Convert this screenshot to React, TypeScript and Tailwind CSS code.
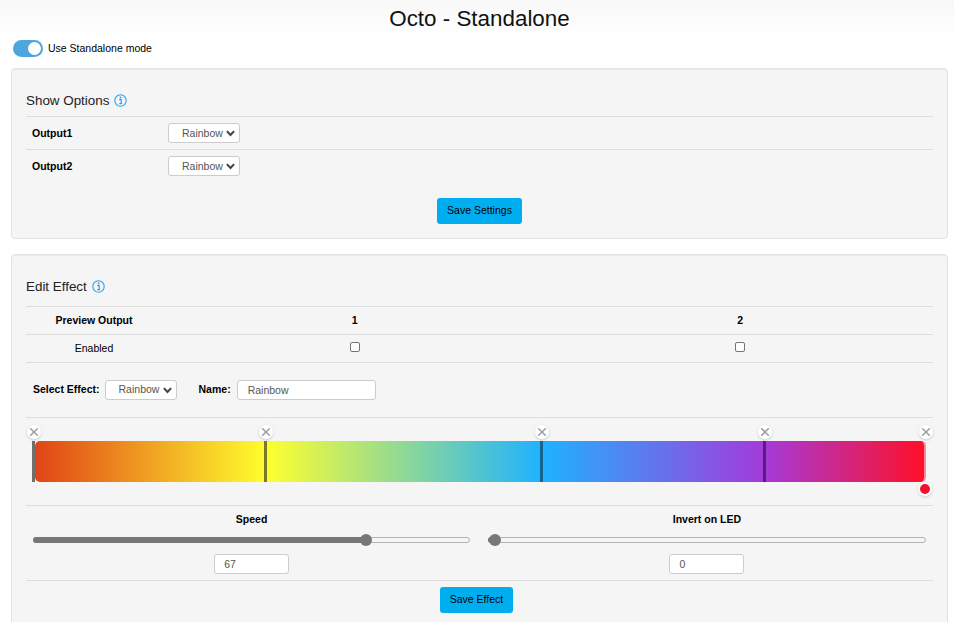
import React from "react";

const FONT = "font-['Liberation_Sans',Arial,sans-serif]";

function InfoIcon() {
  return (
    <svg width="13" height="13" viewBox="0 0 13 13" fill="none" className="ml-[5px]">
      <circle cx="6.5" cy="6.5" r="5.7" stroke="#2f9fe8" strokeWidth="1.1" />
      <circle cx="6.5" cy="3.6" r="1" fill="#2f9fe8" />
      <path d="M5.2 5.6H7.2V9.4M5.2 9.7H8.2" stroke="#2f9fe8" strokeWidth="1.2" />
    </svg>
  );
}

function Select() {
  return (
    <div className="relative h-5 w-[72px] shrink-0">
      <select className="block h-5 w-full appearance-none rounded-[3px] border border-[#ccc] bg-white pl-[13px] text-[10.5px] font-normal leading-none text-[#555] outline-none">
        <option>Rainbow</option>
      </select>
      <svg width="9" height="7" viewBox="0 0 9 7" fill="none" className="pointer-events-none absolute right-[5px] top-[7px]">
        <path d="M0.9 1.1L4.5 5L8.1 1.1" stroke="#444" strokeWidth="2.1" />
      </svg>
    </div>
  );
}

function Handle({ left }: { left: string }) {
  return (
    <div className={`absolute top-[-16px] ${left} flex h-[14px] w-[14px] -translate-x-1/2 items-center justify-center rounded-full bg-white shadow-[0_1px_3px_rgba(0,0,0,0.16)]`}>
      <svg width="10" height="10" viewBox="0 0 10 10">
        <path d="M1.2 1.2L8.8 8.8M8.8 1.2L1.2 8.8" stroke="#9aa0a6" strokeWidth="1.6" />
      </svg>
    </div>
  );
}

function Stop({ left, color }: { left: string; color: string }) {
  return <div className={`absolute top-0 h-full w-[3px] ${left} ${color}`} />;
}

function Slider({ percent }: { percent: number }) {
  const center = `calc(6px + ${percent / 100} * (100% - 12px))`;
  return (
    <div className="relative h-[6px] w-full rounded-full border border-[#b4b4b4] bg-[#f5f5f5]">
      <div className="absolute -left-px -top-px h-[6px] rounded-full bg-[#777]" style={{ width: center }} />
      <div className="absolute top-1/2 h-3 w-3 -translate-x-1/2 -translate-y-1/2 rounded-full bg-[#777]" style={{ left: center }} />
    </div>
  );
}

function Slot({ label, percent, value }: { label: string; percent: number; value: string }) {
  return (
    <div className="flex flex-col items-center">
      <div className="flex h-[27px] items-center text-[10.5px] font-bold text-black">{label}</div>
      <div className="flex h-[14px] w-full items-center">
        <Slider percent={percent} />
      </div>
      <input
        readOnly
        value={value}
        className="mb-[6px] mt-[7px] h-5 w-[75px] rounded-[3px] border border-[#ccc] bg-white pl-[9px] text-[10.5px] text-[#555] outline-none"
      />
    </div>
  );
}

export default function App() {
  return (
    <div className={`h-[622px] w-[954px] overflow-hidden bg-white ${FONT}`}>
      <header className="flex h-[38px] items-center justify-center bg-gradient-to-b from-[#f8f8f8] to-white pl-[5px] text-[22.4px] leading-none text-[#111]">
        Octo - Standalone
      </header>

      <div className="ml-[13px] mt-[2px] flex h-[17px] items-center">
        <div className="flex h-[17px] w-[30px] items-center justify-end rounded-full bg-[#4fa5dd] pr-[2px]">
          <div className="h-[13px] w-[13px] rounded-full bg-white" />
        </div>
        <span className="ml-[5px] text-[10.5px] text-black">Use Standalone mode</span>
      </div>

      <main className="ml-[11px] mr-[6px] mt-[11px] flex flex-col gap-[15px]">
        <section className="h-[171px] rounded-[4px] border border-[#e3e3e3] bg-[#f5f5f5] px-[14px] shadow-[inset_0_1px_1px_rgba(0,0,0,0.05)]">
          <h2 className="mt-[21px] flex h-5 items-center text-[13.4px] font-normal leading-none text-[#222]">
            <span className="mt-[2px]">Show Options</span>
            <InfoIcon />
          </h2>
          <div className="mt-[6px] border-t border-[#ddd]">
            <div className="flex h-[32px] items-center">
              <div className="mt-[2px] w-[142px] pl-[6px] text-[10.5px] font-bold text-black">Output1</div>
              <Select />
            </div>
            <div className="flex h-[33px] items-center border-t border-[#ddd]">
              <div className="mt-[2px] w-[142px] pl-[6px] text-[10.5px] font-bold text-black">Output2</div>
              <Select />
            </div>
          </div>
          <div className="mt-[16px] flex justify-center">
            <button className="h-[26px] w-[85px] rounded-[3px] bg-[#00aeef] text-[10.5px] text-black">Save Settings</button>
          </div>
        </section>

        <section className="h-[400px] rounded-[4px] border border-[#e3e3e3] bg-[#f5f5f5] px-[14px] shadow-[inset_0_1px_1px_rgba(0,0,0,0.05)]">
          <h2 className="mt-[21px] flex h-5 items-center text-[13.4px] font-normal leading-none text-[#222]">
            <span className="mt-[2px]">Edit Effect</span>
            <InfoIcon />
          </h2>
          <div className="mt-[10px] grid grid-cols-[136px_1fr_1fr] items-center border-t border-[#ddd] text-[10.5px] text-black">
            <div className="flex h-[27px] items-center justify-center font-bold">Preview Output</div>
            <div className="flex h-[27px] items-center justify-center font-bold">1</div>
            <div className="flex h-[27px] items-center justify-center font-bold">2</div>
            <div className="col-span-3 border-t border-[#ddd]" />
            <div className="flex h-[27px] items-center justify-center">Enabled</div>
            <div className="flex h-[27px] items-center justify-center">
              <input type="checkbox" className="mb-[3px] h-[10px] w-[10px] appearance-none rounded-[2px] border border-[#767676] bg-white" />
            </div>
            <div className="flex h-[27px] items-center justify-center">
              <input type="checkbox" className="mb-[3px] h-[10px] w-[10px] appearance-none rounded-[2px] border border-[#767676] bg-white" />
            </div>
          </div>
          <div className="flex h-[56px] items-center border-y border-[#ddd] pb-[1px] pl-[7px] text-[10.5px] font-bold text-black">
            <span className="mr-[5px]">Select Effect:</span>
            <Select />
            <span className="ml-[22px] mr-[6px]">Name:</span>
            <input
              readOnly
              value="Rainbow"
              className="h-5 w-[139px] rounded-[3px] border border-[#ccc] bg-white pl-[10px] text-[10.5px] font-normal text-[#555] outline-none"
            />
          </div>

          <div className="h-[87px] pl-[9px] pr-[7px] pt-[23px]">
            <div className="relative h-[41px] w-full rounded-[5px] border-r-2 border-r-[#ff8a95] bg-[linear-gradient(to_right,#e04416_0%,#ffff2e_26%,#1fb2ff_57%,#a43adb_82%,#ff1028_100%)]">
              <Stop left="left-[-3px]" color="bg-[#6f6f6f]" />
              <Stop left="left-[229px]" color="bg-[#7a7a2a]" />
              <Stop left="left-[505px]" color="bg-[#17648f]" />
              <Stop left="left-[728px]" color="bg-[#571e7e]" />
              <Handle left="left-[-1px]" />
              <Handle left="left-[231px]" />
              <Handle left="left-[507px]" />
              <Handle left="left-[730px]" />
              <Handle left="left-[891px]" />
              <div className="absolute left-[890px] top-[41px] h-[14px] w-[14px] -translate-x-1/2 rounded-full border-2 border-white bg-[#f2112b] shadow-[0_1px_3px_rgba(0,0,0,0.16)]" />
            </div>
          </div>

          <div className="grid grid-cols-2 gap-x-[18px] border-y border-[#ddd] pl-[7px] pr-[7.5px]">
            <Slot label="Speed" percent={77} value="67" />
            <Slot label="Invert on LED" percent={0} value="0" />
          </div>
          <div className="mt-[6px] flex justify-center pr-[6px]">
            <button className="h-[26px] w-[73px] rounded-[3px] bg-[#00aeef] text-[10.5px] text-black">Save Effect</button>
          </div>
        </section>
      </main>
    </div>
  );
}
